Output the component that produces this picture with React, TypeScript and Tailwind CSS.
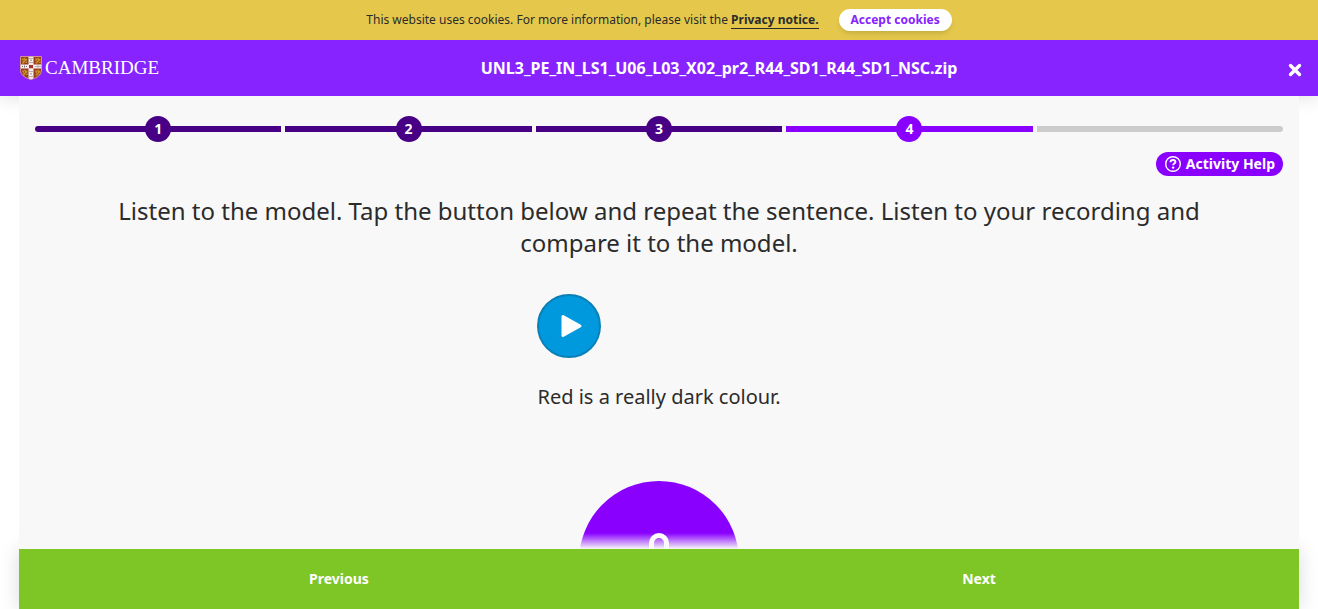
import React from "react";

const steps = [
  { label: "1", state: "done" },
  { label: "2", state: "done" },
  { label: "3", state: "done" },
  { label: "4", state: "current" },
  { label: "5", state: "todo" },
];

const barColour: Record<string, string> = {
  done: "bg-[#470085]",
  current: "bg-[#8900ff]",
  todo: "bg-[#cccccc]",
};

function Lion({ x, y }: { x: number; y: number }) {
  return (
    <g transform={`translate(${x} ${y})`}>
      <path fill="#c9962c" d="M.8 1.500h2V.8h1.400v1H6v1.600H5.200v1.200H6.200V6H4.600V5.200H3.200V6.400H1V5.200h1V3.600H.8z" />
      <path fill="#5e3a14" d="M2.400 2.600h1v1h-1zM4.200 4h.9v.9h-.9z" />
    </g>
  );
}

function Shield() {
  return (
    <svg viewBox="0 0 22 24" className="h-6 w-[22px]" aria-hidden="true">
      <clipPath id="shield">
        <path d="M.5.5h21V14c0 5-4 7.500-10.500 9.500C4.500 21.500.5 19 .5 14z" />
      </clipPath>
      <g clipPath="url(#shield)">
        <path fill="#9c3a1c" d="M0 0h22v24H0z" />
        <path fill="#f4eeee" d="M8.500 0h5v24h-5zM0 8.500h22v4H0z" />
        <Lion x={1} y={1} />
        <Lion x={14.5} y={1} />
        <Lion x={1.5} y={13} />
        <Lion x={14.5} y={13} />
        <path
          fill="#77706f"
          d="M9.500 2h1v1h-1zM11.500 2h1v1h-1zM10.500 3.500h1v1.500h-1zM9.500 6h1v1h-1zM11.500 6h1v1h-1zM9.500 15h1v1h-1zM11.500 15h1v1h-1zM10.500 17h1v1.500h-1zM9.500 20h1v1h-1zM11.500 20h1v1h-1zM2 10h1v1H2zM4 9.500h1v2H4zM6 10h1v1H6zM15.500 10h1v1h-1zM17.500 9.500h1v2h-1zM19.500 10h1v1h-1z"
        />
        <path fill="#b52a20" d="M9 9h4v3.200H9z" />
        <path fill="#8f4a3a" d="M10.500 9.800h1v1.600h-1z" />
      </g>
      <path
        d="M.5.5h21V14c0 5-4 7.500-10.500 9.500C4.500 21.500.5 19 .5 14z"
        fill="none"
        stroke="#dcab98"
        strokeWidth=".8"
      />
    </svg>
  );
}

export default function App() {
  return (
    <div className="flex h-screen flex-col overflow-hidden bg-white font-['Noto_Sans',sans-serif] text-[#2b2b2b]">
      <aside className="relative z-10 flex h-10 shrink-0 items-center justify-center gap-5 bg-[#e5c84b] text-xs">
        <p>
          This website uses cookies. For more information, please visit the{" "}
          <a href="#privacy" className="border-b border-[#2b2b2b] font-bold">
            Privacy notice.
          </a>
        </p>
        <button className="h-[22px] rounded-full bg-white px-3 font-bold text-[#8623ff] shadow-md">
          Accept cookies
        </button>
      </aside>

      <header className="flex h-14 shrink-0 items-center bg-[#8623ff] pr-4 pl-5 text-white shadow-[0_0_20px_rgba(0,0,0,0.15)]">
        <a
          href="#home"
          className="flex w-[140px] items-center gap-[3px] font-['Liberation_Serif',serif] text-[19px] leading-6"
        >
          <Shield />
          CAMBRIDGE
        </a>
        <h1 className="flex-1 text-center text-base font-bold">
          UNL3_PE_IN_LS1_U06_L03_X02_pr2_R44_SD1_R44_SD1_NSC.zip
        </h1>
        <button aria-label="Close" className="flex w-6 justify-end pt-1">
          <svg viewBox="0 0 14 14" className="size-3.5" aria-hidden="true">
            <path d="M2.500 2.500l9 9M11.500 2.500l-9 9" stroke="#fff" strokeWidth="3.400" strokeLinecap="round" />
          </svg>
        </button>
      </header>

      <div className="relative mx-auto flex min-h-0 w-[calc(100%-38px)] max-w-7xl flex-1 flex-col">
        <main className="relative min-h-0 flex-1 overflow-hidden bg-[#f8f8f8] px-4 pt-5">
          <ol className="flex gap-1">
            {steps.map((s) => (
              <li
                key={s.label}
                className="grid h-[26px] flex-1 items-center first:[&>i]:rounded-l-full last:[&>i]:rounded-r-full"
              >
                <i className={`col-start-1 row-start-1 h-1.5 ${barColour[s.state]}`} />
                {s.state !== "todo" && (
                  <span
                    className={`col-start-1 row-start-1 grid size-[26px] place-items-center justify-self-center rounded-full text-sm font-bold text-white ${barColour[s.state]}`}
                  >
                    {s.label}
                  </span>
                )}
              </li>
            ))}
          </ol>

          <div className="mt-2.5 flex justify-end">
            <button className="flex h-6 items-center gap-1 rounded-full bg-[#8900ff] px-2 text-sm font-bold text-white">
              <svg viewBox="0 0 18 18" className="size-[18px]" fill="none" stroke="#fff" aria-hidden="true">
                <circle cx="9" cy="9" r="7.300" strokeWidth="1.400" />
                <path d="M6.500 7.200c0-1.400 1.100-2.200 2.500-2.200s2.400.8 2.400 2c0 1.600-2.300 1.600-2.300 3.300" strokeWidth="1.900" />
                <circle cx="9.100" cy="12.600" r="1.200" fill="#fff" stroke="none" />
              </svg>
              Activity Help
            </button>
          </div>

          <h2 className="mt-[19px] px-16 text-center text-2xl leading-8">
            Listen to the model. Tap the button below and repeat the sentence. Listen to your recording and compare it
            to the model.
          </h2>

          <div className="mx-auto mt-[35px] w-fit">
            <button
              aria-label="Play"
              className="grid size-16 place-items-center rounded-full border-2 border-[#0a80b8] bg-[#0099dd] pl-1"
            >
              <svg viewBox="0 0 24 24" className="size-6" aria-hidden="true">
                <path d="M4 2.500L21 12 4 21.500z" fill="#fff" stroke="#fff" strokeWidth="3" strokeLinejoin="round" />
              </svg>
            </button>
            <p className="mt-[23px] text-xl leading-8">Red is a really dark colour.</p>
          </div>

          <button
            aria-label="Record"
            className="mx-auto mt-[68px] flex size-40 justify-center rounded-full bg-[#8900ff] pt-[52px]"
          >
            <svg viewBox="0 0 40 56" className="h-14 w-10" fill="none" stroke="#fff" strokeWidth="5" aria-hidden="true">
              <rect x="12.500" y="2.500" width="15" height="30" rx="7.500" />
              <path d="M4 24c0 22 32 22 32 0M20 41v12M10 53h20" />
            </svg>
          </button>
          <div className="pointer-events-none absolute inset-x-0 bottom-0 h-4 bg-linear-to-b from-transparent to-[#f8f8f8]" />
        </main>

        <nav className="grid h-[60px] shrink-0 grid-cols-2 bg-[#7ec526] text-sm font-bold text-white shadow-[0_0_20px_rgba(0,0,0,0.15)]">
          <button>Previous</button>
          <button>Next</button>
        </nav>
      </div>
    </div>
  );
}
